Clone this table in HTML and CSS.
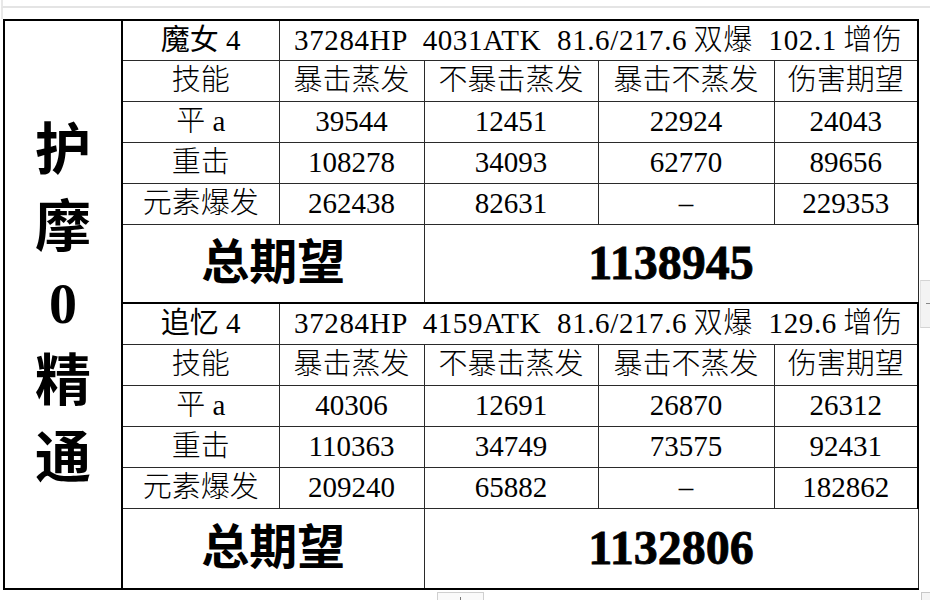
FILE: index.html
```html
<!DOCTYPE html>
<html lang="zh">
<head>
<meta charset="utf-8">
<title>护摩0精通</title>
<link rel="stylesheet" href="styles.css">
</head>
<body>
<div class="sheet">
  <div class="topbar"></div>
  <div class="gap"></div>
  <table class="grid">
    <colgroup>
      <col class="w1"><col class="w2"><col class="w3"><col class="w4"><col class="w5"><col class="w6">
    </colgroup>
    <tr class="r-head first">
      <td class="side" rowspan="12"><span>护</span><span>摩</span><span class="num">0</span><span>精</span><span>通</span></td>
      <td class="name">魔女 4</td>
      <td class="stats last" colspan="4">37284HP 4031ATK 81.6/217.6&#8201;双爆 102.1&#8201;增伤</td>
    </tr>
    <tr class="r">
      <td>技能</td><td>暴击蒸发</td><td>不暴击蒸发</td><td>暴击不蒸发</td><td class="last">伤害期望</td>
    </tr>
    <tr class="r">
      <td>平 a</td><td>39544</td><td>12451</td><td>22924</td><td class="last">24043</td>
    </tr>
    <tr class="r">
      <td>重击</td><td>108278</td><td>34093</td><td>62770</td><td class="last">89656</td>
    </tr>
    <tr class="r">
      <td>元素爆发</td><td>262438</td><td>82631</td><td>–</td><td class="last">229353</td>
    </tr>
    <tr class="total t1">
      <td class="total-label" colspan="2">总期望</td>
      <td class="total-val" colspan="3">1138945</td>
    </tr>
    <tr class="r-head">
      <td class="name">追忆 4</td>
      <td class="stats last" colspan="4">37284HP 4159ATK 81.6/217.6&#8201;双爆 129.6&#8201;增伤</td>
    </tr>
    <tr class="r">
      <td>技能</td><td>暴击蒸发</td><td>不暴击蒸发</td><td>暴击不蒸发</td><td class="last">伤害期望</td>
    </tr>
    <tr class="r">
      <td>平 a</td><td>40306</td><td>12691</td><td>26870</td><td class="last">26312</td>
    </tr>
    <tr class="r">
      <td>重击</td><td>110363</td><td>34749</td><td>73575</td><td class="last">92431</td>
    </tr>
    <tr class="r">
      <td>元素爆发</td><td>209240</td><td>65882</td><td>–</td><td class="last">182862</td>
    </tr>
    <tr class="total t2">
      <td class="total-label" colspan="2">总期望</td>
      <td class="total-val" colspan="3">1132806</td>
    </tr>
  </table>
  <div class="side-widget"><span class="tick"></span></div>
  <div class="bottom-widget"><span class="tick-v"></span></div>
  <div class="corner-widget"></div>
</div>
</body>
</html>
```
FILE: styles.css
```css
html, body {
  margin: 0;
  padding: 0;
  background: #ffffff;
}

.sheet {
  position: relative;
  width: 930px;
  height: 600px;
  overflow: hidden;
  font-family: "Liberation Serif", "Noto Sans CJK SC", serif;
  color: #000;
}

.topbar {
  height: 6px;
  border-bottom: 2px solid #e4e4e4;
  border-left: 2px solid #e8e8e8;
  margin-left: 1px;
}

.gap {
  height: 11px;
  border-left: 2px solid #e8e8e8;
  margin-left: 1px;
}

.grid {
  margin-left: 3px;
  border-collapse: collapse;
  table-layout: fixed;
  width: 916px;
}

.w1 { width: 118px; }
.w2 { width: 157px; }
.w3 { width: 145px; }
.w4 { width: 174px; }
.w5 { width: 176px; }
.w6 { width: 144px; }

.grid td {
  border: 1px solid #2a2a2a;
  padding: 0;
  text-align: center;
  vertical-align: middle;
  font-size: 29px;
  font-weight: 300;
  white-space: nowrap;
  line-height: 1;
}

.grid tr.r,
.grid tr.r-head { height: 41px; }
.grid tr.first { height: 40px; }
.grid tr.t1 { height: 79px; }
.grid tr.t2 { height: 81px; }

.grid tr.first td { border-top: 2px solid #000; }

.grid td.last { border-right: 2px solid #000; }

.grid td.side {
  border: 2px solid #000;
  font-size: 56px;
  font-weight: 700;
}

.side span {
  display: block;
  line-height: 77px;
}

.side span.num {
  font-family: "Liberation Serif", serif;
}

.grid td.name { font-weight: 400; }

.grid td.stats {
  letter-spacing: 0.6px;
  word-spacing: 8px;
}

.grid tr.total td {
  font-size: 48px;
  font-weight: 700;
  border-right: 1px solid #2a2a2a;
  border-bottom: 2px solid #000;
}

.grid td.total-val {
  font-size: 48px;
  font-weight: 400;
  -webkit-text-stroke: 0.8px #000;
}

.side-widget {
  position: absolute;
  left: 920px;
  top: 280px;
  width: 12px;
  height: 46px;
  background: #f3f3f3;
  border-top: 1px solid #d4d4d4;
  border-bottom: 1px solid #d4d4d4;
  border-left: 1px solid #e2e2e2;
}

.side-widget .tick {
  position: absolute;
  left: 5px;
  top: 22px;
  width: 6px;
  height: 1px;
  background: #888;
}

.bottom-widget {
  position: absolute;
  left: 437px;
  top: 592px;
  width: 45px;
  height: 12px;
  border: 1px solid #d0d0d0;
  background: #fafafa;
}

.bottom-widget .tick-v {
  position: absolute;
  left: 22px;
  top: 4px;
  width: 1px;
  height: 6px;
  background: #777;
}

.corner-widget {
  position: absolute;
  left: 921px;
  top: 592px;
  width: 10px;
  height: 10px;
  border: 1px solid #c8c8c8;
  background: #f5f5f5;
}
```
